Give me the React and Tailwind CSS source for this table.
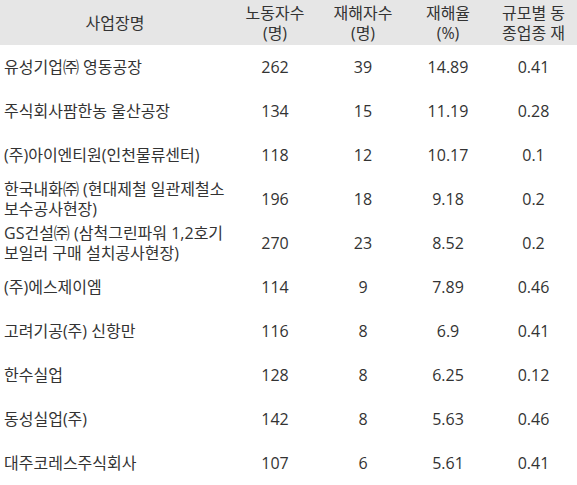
const rows = [
  { name: ['유성기업㈜ 영동공장'], workers: '262', victims: '39', rate: '14.89', avg: '0.41' },
  { name: ['주식회사팜한농 울산공장'], workers: '134', victims: '15', rate: '11.19', avg: '0.28' },
  { name: ['(주)아이엔티원(인천물류센터)'], workers: '118', victims: '12', rate: '10.17', avg: '0.1' },
  { name: ['한국내화㈜ (현대제철 일관제철소', '보수공사현장)'], workers: '196', victims: '18', rate: '9.18', avg: '0.2' },
  { name: ['GS건설㈜ (삼척그린파워 1,2호기', '보일러 구매 설치공사현장)'], workers: '270', victims: '23', rate: '8.52', avg: '0.2' },
  { name: ['(주)에스제이엠'], workers: '114', victims: '9', rate: '7.89', avg: '0.46' },
  { name: ['고려기공(주) 신항만'], workers: '116', victims: '8', rate: '6.9', avg: '0.41' },
  { name: ['한수실업'], workers: '128', victims: '8', rate: '6.25', avg: '0.12' },
  { name: ['동성실업(주)'], workers: '142', victims: '8', rate: '5.63', avg: '0.46' },
  { name: ['대주코레스주식회사'], workers: '107', victims: '6', rate: '5.61', avg: '0.41' },
]

const cols = 'grid grid-cols-[230px_90px_86px_84px_87px]'

export default function App() {
  return (
    <div
      className="w-[577px] h-[485px] overflow-hidden bg-white text-[16px] leading-[20px] text-[#333]"
      style={{ fontFamily: '"Open Sans", "Noto Sans CJK KR", sans-serif' }}
    >
      {/* header */}
      <div className={`${cols} h-[45px] bg-[#e6e6e6] items-center text-center`}>
        <div>사업장명</div>
        <div>노동자수<br />(명)</div>
        <div>재해자수<br />(명)</div>
        <div>재해율<br />(%)</div>
        <div className="whitespace-nowrap">규모별 동<br />종업종 재</div>
      </div>

      {/* body */}
      {rows.map((r) => (
        <div key={r.name[0]} className={`${cols} h-[44px] items-center`}>
          <div className="pl-1 whitespace-nowrap">
            {r.name.map((l) => (
              <div key={l}>{l}</div>
            ))}
          </div>
          <div className="text-center">{r.workers}</div>
          <div className="text-center">{r.victims}</div>
          <div className="text-center">{r.rate}</div>
          <div className="text-center">{r.avg}</div>
        </div>
      ))}
    </div>
  )
}
